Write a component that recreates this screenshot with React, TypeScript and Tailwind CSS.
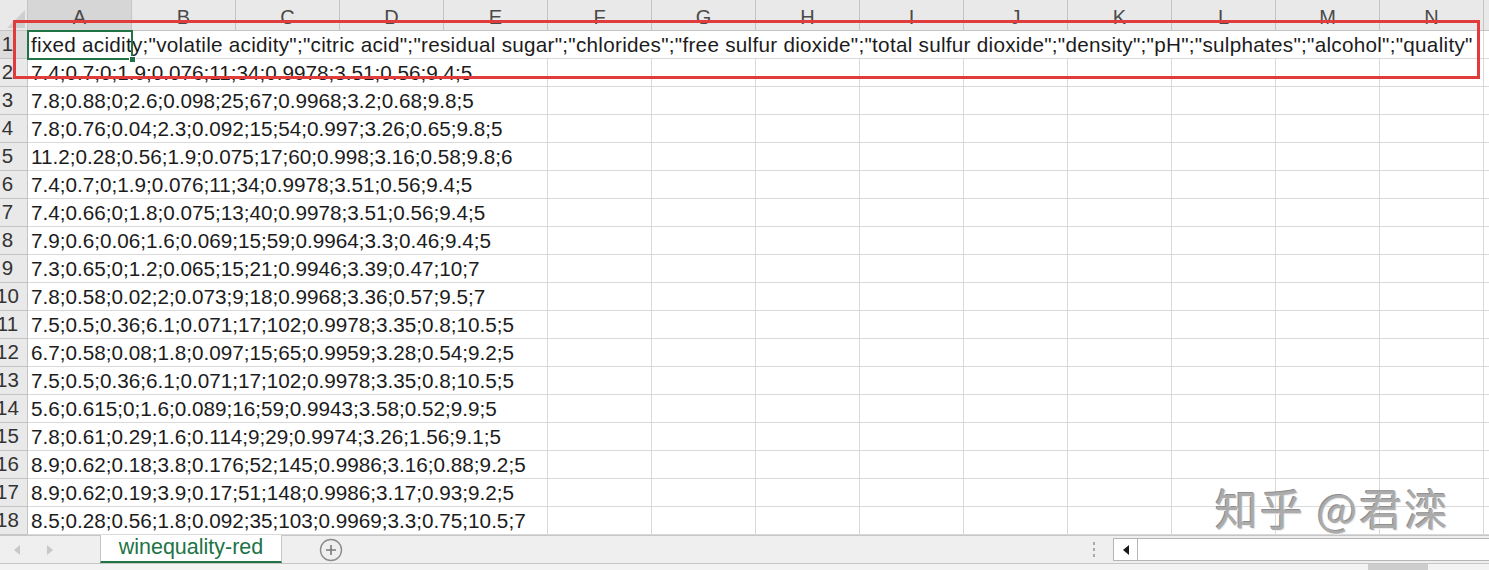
const COLS = ['A', 'B', 'C', 'D', 'E', 'F', 'G', 'H', 'I', 'J', 'K', 'L', 'M', 'N', 'O'];

const HEADER_TEXT =
  'fixed acidity;"volatile acidity";"citric acid";"residual sugar";"chlorides";"free sulfur dioxide";"total sulfur dioxide";"density";"pH";"sulphates";"alcohol";"quality"';

const ROWS = [
  '7.4;0.7;0;1.9;0.076;11;34;0.9978;3.51;0.56;9.4;5',
  '7.8;0.88;0;2.6;0.098;25;67;0.9968;3.2;0.68;9.8;5',
  '7.8;0.76;0.04;2.3;0.092;15;54;0.997;3.26;0.65;9.8;5',
  '11.2;0.28;0.56;1.9;0.075;17;60;0.998;3.16;0.58;9.8;6',
  '7.4;0.7;0;1.9;0.076;11;34;0.9978;3.51;0.56;9.4;5',
  '7.4;0.66;0;1.8;0.075;13;40;0.9978;3.51;0.56;9.4;5',
  '7.9;0.6;0.06;1.6;0.069;15;59;0.9964;3.3;0.46;9.4;5',
  '7.3;0.65;0;1.2;0.065;15;21;0.9946;3.39;0.47;10;7',
  '7.8;0.58;0.02;2;0.073;9;18;0.9968;3.36;0.57;9.5;7',
  '7.5;0.5;0.36;6.1;0.071;17;102;0.9978;3.35;0.8;10.5;5',
  '6.7;0.58;0.08;1.8;0.097;15;65;0.9959;3.28;0.54;9.2;5',
  '7.5;0.5;0.36;6.1;0.071;17;102;0.9978;3.35;0.8;10.5;5',
  '5.6;0.615;0;1.6;0.089;16;59;0.9943;3.58;0.52;9.9;5',
  '7.8;0.61;0.29;1.6;0.114;9;29;0.9974;3.26;1.56;9.1;5',
  '8.9;0.62;0.18;3.8;0.176;52;145;0.9986;3.16;0.88;9.2;5',
  '8.9;0.62;0.19;3.9;0.17;51;148;0.9986;3.17;0.93;9.2;5',
  '8.5;0.28;0.56;1.8;0.092;35;103;0.9969;3.3;0.75;10.5;7',
];

function RowNumber({ n, active }: { n: number; active?: boolean }) {
  return (
    <div
      className={`w-[28px] shrink-0 overflow-hidden border-r border-b border-[#c4c4c4] flex items-center ${
        active ? 'bg-[#dcdcdc]' : 'bg-[#e9e9e9]'
      }`}
    >
      <div className="w-[15px] shrink-0 flex justify-center">
        <span className="whitespace-nowrap text-[20.5px] text-[#333]">{n}</span>
      </div>
    </div>
  );
}

function SheetRow({ n, text, span, wide }: { n: number; text: string; span: number; wide?: boolean }) {
  const rest = COLS.slice(span);
  return (
    <div className="flex h-[28px] shrink-0">
      <RowNumber n={n} active={n === 1} />
      <div
        className={`shrink-0 border-r border-b border-[#d9d9d9] flex items-center pl-[3px] whitespace-nowrap text-[20.7px] text-[#1c1c1c] ${
          wide ? 'tracking-[0.27px]' : ''
        }`}
        style={{ width: span * 104 }}
      >
        {text}
      </div>
      {rest.map((c) => (
        <div key={c} className="w-[104px] shrink-0 border-r border-b border-[#d9d9d9]" />
      ))}
    </div>
  );
}

export default function App() {
  return (
    <div className="relative w-[1489px] h-[570px] overflow-hidden bg-white font-['Liberation_Sans',Arial,sans-serif] flex flex-col">
      {/* column headers */}
      <div className="flex h-[31px] shrink-0">
        <div className="w-[28px] shrink-0 bg-[#e9e9e9] border-r border-b border-[#c4c4c4] relative">
          <svg className="absolute left-0 top-0" width="28" height="31" viewBox="0 0 28 31">
            <polygon points="7,28 25,28 25,10" fill="#cfcfcf" />
          </svg>
        </div>
        {COLS.map((c, i) => (
          <div
            key={c}
            className={`w-[104px] shrink-0 border-r border-b border-[#c4c4c4] flex items-center justify-center pt-[4px] text-[20px] text-[#4a4a4a] ${
              i === 0 ? 'bg-[#d6d6d6]' : 'bg-[#e9e9e9]'
            }`}
          >
            {c}
          </div>
        ))}
      </div>

      {/* rows */}
      <SheetRow n={1} text={HEADER_TEXT} span={14} wide />
      {ROWS.map((r, i) => (
        <SheetRow key={i} n={i + 2} text={r} span={5} />
      ))}

      {/* sheet tabs */}
      <div className="flex h-[29px] shrink-0 bg-[#efefef] border-t border-b border-[#c6c6c6] items-stretch">
        <div className="w-[100px] shrink-0 flex items-center">
          <svg className="ml-[14px]" width="6" height="10" viewBox="0 0 6 10">
            <polygon points="6,0 6,10 0,5" fill="#c8c8c8" />
          </svg>
          <svg className="ml-[27px]" width="6" height="10" viewBox="0 0 6 10">
            <polygon points="0,0 0,10 6,5" fill="#c8c8c8" />
          </svg>
        </div>
        <div className="w-[182px] shrink-0 bg-white border-l border-r border-[#c6c6c6] border-b-[2px] border-b-[#217346] -mt-px flex items-center justify-center text-[21.5px] text-[#217346] pb-[2px]">
          winequality-red
        </div>
        <div className="w-[98px] shrink-0 flex items-center justify-center">
          <svg width="24" height="24" viewBox="0 0 24 24">
            <circle cx="12" cy="12" r="10.5" fill="none" stroke="#8c8c8c" strokeWidth="1.4" />
            <path d="M12 7v10M7 12h10" stroke="#7a7a7a" strokeWidth="1.6" />
          </svg>
        </div>
        <div className="flex-1" />
        <div className="w-[38px] shrink-0 flex flex-col items-center justify-center gap-[3px]">
          <span className="w-[2px] h-[3px] bg-[#a8a8a8]" />
          <span className="w-[2px] h-[3px] bg-[#a8a8a8]" />
          <span className="w-[2px] h-[3px] bg-[#a8a8a8]" />
        </div>
        <div className="w-[376px] shrink-0 my-[2px] bg-white border border-[#b5b5b5] border-r-0 flex">
          <div className="w-[24px] shrink-0 border-r border-[#b5b5b5] flex items-center justify-center">
            <svg width="6" height="10" viewBox="0 0 6 10">
              <polygon points="6,0 6,10 0,5" fill="#1a1a1a" />
            </svg>
          </div>
        </div>
      </div>
      <div className="h-[6px] shrink-0 bg-[#f3f3f3] flex">
        <div className="w-[1368px] shrink-0" />
        <div className="w-[60px] shrink-0 bg-[#cdcdcd]" />
      </div>

      {/* active cell */}
      <div className="absolute left-[27px] top-[30px] w-[106px] h-[30px] border-2 border-[#217346]" />
      <div className="absolute left-[129px] top-[56px] w-[7px] h-[7px] bg-[#217346] border border-white" />

      {/* annotation */}
      <div className="absolute left-[13px] top-[20px] w-[1467px] h-[59px] border-[3px] border-[#e03c3c]" />

      {/* watermark */}
      <div className="absolute left-[1215px] top-[486px] text-[43px] leading-none tracking-[2px] text-[#ababab] font-['Noto_Sans_CJK_SC',sans-serif] [text-shadow:1px_1px_0_#ececec,-1px_-1px_0_#8f8f8f] whitespace-nowrap">
        知乎 @君滦
      </div>
    </div>
  );
}
